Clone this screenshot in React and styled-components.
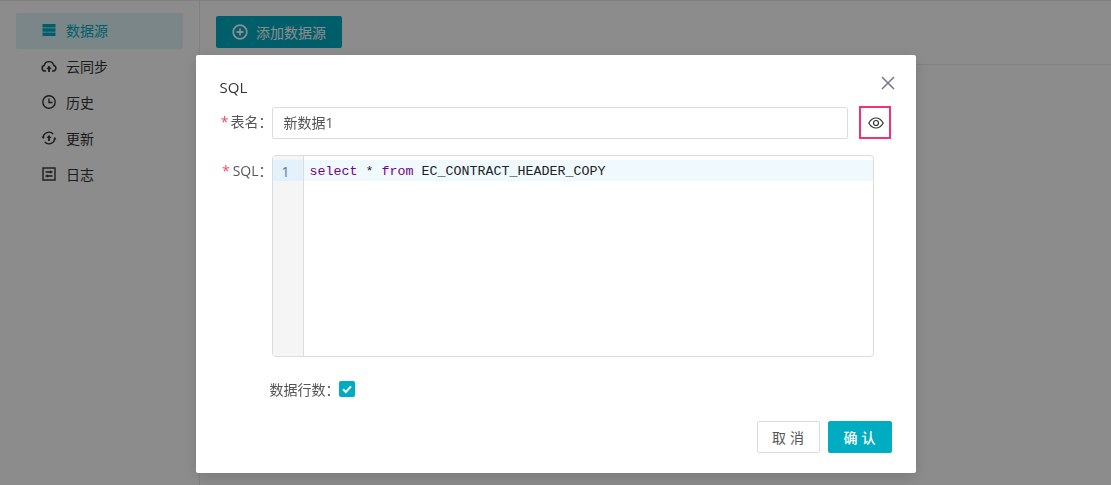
import styled, { createGlobalStyle } from "styled-components";

const GlobalStyle = createGlobalStyle`
  html, body {
    margin: 0;
    padding: 0;
    background: #fff;
    font-family: "Open Sans", "Noto Sans CJK SC", sans-serif;
    font-size: 14px;
    color: #333;
  }
  * { box-sizing: border-box; }
`;

const Page = styled.div`
  display: flex;
  height: 485px;
  overflow: hidden;
  border-top: 1px solid #e8e8e8;
`;

const Sidebar = styled.nav`
  width: 200px;
  padding: 12px 16px 0;
  border-right: 1px solid #e8e8e8;
  display: flex;
  flex-direction: column;
`;

const NavItem = styled.div`
  height: 36px;
  display: flex;
  align-items: center;
  gap: 9px;
  padding: 0 0 2px 25px;
  border-radius: 2px;
  color: ${(p) => (p.$active ? "#00acc1" : "#333")};
  background: ${(p) => (p.$active ? "#e0f5f7" : "transparent")};
`;

const NavIcon = styled.svg`
  width: 16px;
  height: 16px;
  flex: none;
`;

const Main = styled.main`
  flex: 1;
`;

const TopBar = styled.div`
  height: 64px;
  padding: 15px 16px;
  border-bottom: 1px solid #eee;
`;

const AddButton = styled.button`
  height: 32px;
  width: 126px;
  border: none;
  border-radius: 2px;
  background: #00acc1;
  color: #fff;
  font: inherit;
  display: flex;
  align-items: center;
  justify-content: center;
  gap: 8px;
`;

const Overlay = styled.div`
  position: fixed;
  inset: 0;
  background: rgba(0, 0, 0, 0.45);
  display: flex;
  justify-content: center;
  align-items: flex-start;
  padding-top: 55px;
`;

const Modal = styled.div`
  position: relative;
  width: 720px;
  height: 418px;
  background: #fff;
  border-radius: 2px;
  padding: 22px 24px 20px;
  display: flex;
  flex-direction: column;
  box-shadow: 0 4px 16px rgba(0, 0, 0, 0.15);
`;

const Title = styled.h3`
  margin: 0 0 10px;
  height: 19px;
  font-size: 15px;
  font-weight: 500;
  line-height: 20px;
  color: #333;
`;

const CloseButton = styled.button`
  position: absolute;
  top: 20px;
  right: 20px;
  width: 16px;
  height: 16px;
  padding: 0;
  border: none;
  background: none;
  color: #72768f;
  display: flex;
`;

const FormRow = styled.div`
  display: flex;
  align-items: ${(p) => (p.$top ? "flex-start" : "center")};
  margin-bottom: ${(p) => p.$gap || 0}px;
`;

const Label = styled.label`
  width: 53px;
  margin-right: -1px;
  flex: none;
  text-align: right;
  line-height: ${(p) => (p.$top ? "32px" : "20px")};
  padding-bottom: ${(p) => (p.$top ? 0 : 2)}px;
  color: #555;
  white-space: nowrap;
`;

const Star = styled.span`
  color: #f5455c;
  margin-right: ${(p) => (p.$wide ? 3 : 2)}px;
`;

const NameInput = styled.input`
  width: 576px;
  height: 32px;
  border: 1px solid #dcdcdc;
  border-radius: 2px;
  padding: 0 10px 2px 11px;
  font: inherit;
  color: #555;
  outline: none;
`;

const EyeButton = styled.button`
  width: 32px;
  height: 33px;
  margin-left: 11px;
  padding: 0 0 0 2px;
  border: 2px solid #f4306f;
  background: #fff;
  color: #333;
  display: flex;
  align-items: center;
  justify-content: center;
`;

const Editor = styled.div`
  width: 602px;
  height: 202px;
  border: 1px solid #dcdcdc;
  border-radius: 4px;
  overflow: hidden;
  display: flex;
  font-family: "Liberation Mono", monospace;
  font-size: 13.33px;
`;

const Gutter = styled.div`
  width: 31px;
  flex: none;
  padding-top: 4px;
  background: #f5f5f5;
  border-right: 1px solid #ddd;
`;

const LineNo = styled.div`
  height: 21px;
  line-height: 23px;
  padding-left: 9px;
  background: #e2f1fc;
  color: #5c7a8c;
  font-family: "Open Sans", sans-serif;
  font-size: 14px;
`;

const Code = styled.div`
  flex: 1;
  padding-top: 4px;
`;

const ActiveLine = styled.div`
  height: 21px;
  line-height: 23px;
  padding-left: 6px;
  background: #f0f9fe;
  color: #222;
  white-space: pre;
`;

const Keyword = styled.span`
  color: #708;
`;

const CheckRow = styled.div`
  display: flex;
  align-items: center;
  margin: 24px 0 0 50px;
  height: 16px;
  color: #555;
`;

const CheckBox = styled.span`
  width: 16px;
  height: 16px;
  margin-left: -1px;
  border-radius: 2px;
  background: #00acc1;
  display: flex;
  align-items: center;
  justify-content: center;
`;

const Footer = styled.div`
  margin-top: auto;
  display: flex;
  justify-content: flex-end;
  gap: 8px;
`;

const FooterButton = styled.button`
  width: ${(p) => (p.$primary ? 64 : 63)}px;
  height: 32px;
  border-radius: 2px;
  border: 1px solid ${(p) => (p.$primary ? "#00acc1" : "#dcdcdc")};
  background: ${(p) => (p.$primary ? "#00acc1" : "#fff")};
  color: ${(p) => (p.$primary ? "#fff" : "#555")};
  font: inherit;
  font-weight: ${(p) => (p.$primary ? 500 : 400)};
  letter-spacing: 4px;
  padding: 0 0 0 4px;
`;

const iconProps = {
  viewBox: "0 0 16 16",
  fill: "none",
  stroke: "currentColor",
  strokeWidth: 1.4,
};

const DataIcon = () => (
  <NavIcon {...iconProps} stroke="none" fill="currentColor">
    <path d="M1.500 2h13v3.400h-13zM1.500 6.300h13v3.400h-13zM1.500 10.600h13V14h-13z" />
  </NavIcon>
);

const CloudIcon = () => (
  <NavIcon {...iconProps}>
    <path d="M5 13H3.600A2.800 2.800 0 0 1 3.200 7.500a4.900 4.900 0 0 1 9.600 0 2.800 2.800 0 0 1-.4 5.500H11" />
    <path d="M8 14V8.500" strokeWidth="1.800" />
    <path d="M5.800 10.800 8 8l2.200 2.800z" fill="currentColor" strokeWidth="0.500" />
  </NavIcon>
);

const ClockIcon = () => (
  <NavIcon {...iconProps}>
    <circle cx="8" cy="8" r="6.200" />
    <path d="M8 4.500V8.500H11.500" />
  </NavIcon>
);

const UpdateIcon = () => (
  <NavIcon {...iconProps}>
    <path d="M2.200 8a5.800 5.800 0 0 1 10-4M13.800 8a5.800 5.800 0 0 1-10 4" />
    <path d="M.6 6.800h3.200L2.200 9zM15.400 9.200h-3.200L13.800 7z" fill="currentColor" stroke="none" />
    <path d="M8 11V7" strokeWidth="1.800" />
    <path d="M5.500 8 8 5l2.500 3z" fill="currentColor" stroke="none" />
  </NavIcon>
);

const LogIcon = () => (
  <NavIcon {...iconProps}>
    <rect x="2" y="2" width="12" height="12" />
    <path d="M4.500 6H11.500M4.500 10H11.500" />
    <path d="M9.500 4.800v2.400M6.500 8.800v2.400" />
  </NavIcon>
);

const App = () => (
  <>
    <GlobalStyle />
    <Page>
      <Sidebar>
        <NavItem $active>
          <DataIcon />
          数据源
        </NavItem>
        <NavItem>
          <CloudIcon />
          云同步
        </NavItem>
        <NavItem>
          <ClockIcon />
          历史
        </NavItem>
        <NavItem>
          <UpdateIcon />
          更新
        </NavItem>
        <NavItem>
          <LogIcon />
          日志
        </NavItem>
      </Sidebar>
      <Main>
        <TopBar>
          <AddButton>
            <svg width="16" height="16" viewBox="0 0 16 16" fill="none" stroke="currentColor" strokeWidth="1.800">
              <circle cx="8" cy="8" r="6.800" />
              <path d="M8 4.500v7M4.500 8h7" />
            </svg>
            添加数据源
          </AddButton>
        </TopBar>
      </Main>
    </Page>
    <Overlay>
      <Modal>
        <CloseButton aria-label="close">
          <svg width="16" height="16" viewBox="0 0 16 16" fill="none" stroke="currentColor" strokeWidth="1.500">
            <path d="M2 2l12 12M14 2 2 14" />
          </svg>
        </CloseButton>
        <Title>SQL</Title>
        <FormRow $gap={16}>
          <Label>
            <Star>*</Star>表名：
          </Label>
          <NameInput defaultValue="新数据1" />
          <EyeButton aria-label="preview">
            <svg width="16" height="16" viewBox="0 0 16 16" fill="none" stroke="currentColor" strokeWidth="1.200">
              <path d="M.8 8C2.500 5 5 3 8 3s5.500 2 7.200 5c-1.700 3-4.200 5-7.200 5S2.500 11 .8 8z" />
              <circle cx="8" cy="8" r="2.500" />
            </svg>
          </EyeButton>
        </FormRow>
        <FormRow $top>
          <Label $top>
            <Star $wide>*</Star>SQL：
          </Label>
          <Editor>
            <Gutter>
              <LineNo>1</LineNo>
            </Gutter>
            <Code>
              <ActiveLine>
                <Keyword>select</Keyword> * <Keyword>from</Keyword> EC_CONTRACT_HEADER_COPY
              </ActiveLine>
            </Code>
          </Editor>
        </FormRow>
        <CheckRow>
          数据行数：
          <CheckBox>
            <svg width="12" height="12" viewBox="0 0 12 12" fill="none" stroke="#fff" strokeWidth="2">
              <path d="M2 6.200 4.800 9 10 3.400" />
            </svg>
          </CheckBox>
        </CheckRow>
        <Footer>
          <FooterButton>取消</FooterButton>
          <FooterButton $primary>确认</FooterButton>
        </Footer>
      </Modal>
    </Overlay>
  </>
);

export default App;
